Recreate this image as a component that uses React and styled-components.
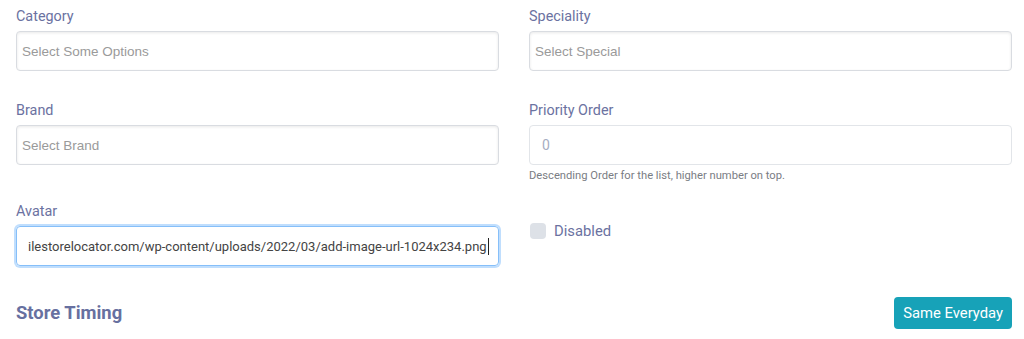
import React from "react";
import styled, { createGlobalStyle } from "styled-components";

const Global = createGlobalStyle`
  html, body { margin: 0; padding: 0; background: #fff; }
  body { font-family: Roboto, "Liberation Sans", sans-serif; }
  * { box-sizing: border-box; }
`;

const Page = styled.div`
  padding: 7px 12px 0 16px;
`;

const Row = styled.div`
  display: grid;
  grid-template-columns: minmax(0, 1fr) minmax(0, 1fr);
  column-gap: 30px;
  margin-bottom: ${(p) => p.$mb}px;
`;

const Group = styled.div`
  display: flex;
  flex-direction: column;
  min-width: 0;
  padding-top: ${(p) => p.$pt || 0}px;
`;

const Label = styled.label`
  font-size: 14.4px;
  line-height: 20px;
  color: #6b72a1;
  margin-bottom: ${(p) => p.$mb ?? 4}px;
`;

const Chosen = styled.div`
  height: 40px;
  border: 1px solid #d9dce1;
  border-radius: 4px;
  box-shadow: inset 0 1px 3px rgba(0, 0, 0, 0.09);
  display: flex;
  align-items: center;
  padding-left: 5px;
  font-family: "Liberation Sans", Arial, sans-serif;
  font-size: 13.5px;
  color: #9a9a9a;
`;

const NumberBox = styled.div`
  height: 40px;
  border: 1px solid #e2e5e9;
  border-radius: 4px;
  display: flex;
  align-items: center;
  padding-left: 12px;
  font-size: 14px;
  color: #a6adc2;
`;

const FocusBox = styled.div`
  height: 40px;
  border: 1px solid #86bff9;
  border-radius: 4px;
  box-shadow: 0 0 0 2px rgba(140, 195, 252, 0.55);
  display: flex;
  align-items: center;
  padding-left: 11px;
  font-size: 13px;
  color: #444;
  white-space: nowrap;
  overflow: hidden;
`;

const Caret = styled.span`
  display: inline-block;
  flex: none;
  width: 1px;
  height: 17px;
  background: #222;
  margin-left: 1px;
`;

const Help = styled.div`
  font-size: 11.2px;
  line-height: 16px;
  color: #7a7d84;
  margin-top: 3px;
`;

const CheckRow = styled.label`
  display: flex;
  align-items: center;
  gap: 8px;
  height: 20px;
  padding-left: 1px;
`;

const Box = styled.span`
  width: 16px;
  height: 16px;
  border-radius: 4px;
  background: #dde1e7;
`;

const CheckText = styled.span`
  font-size: 14.8px;
  color: #6b72a1;
`;

const Section = styled.div`
  display: flex;
  align-items: center;
  justify-content: space-between;
`;

const Heading = styled.h3`
  margin: 0;
  font-size: 18.4px;
  font-weight: 700;
  color: #6770a0;
  position: relative;
  top: -1px;
`;

const Button = styled.button`
  height: 32px;
  padding: 0 9px 0 9px;
  border: none;
  border-radius: 4px;
  background: #17a2b8;
  color: #fff;
  font-family: Roboto, sans-serif;
  font-size: 14.8px;
`;

export default function App() {
  return (
    <>
      <Global />
      <Page>
        <Row $mb={30}>
          <Group>
            <Label>Category</Label>
            <Chosen>Select Some Options</Chosen>
          </Group>
          <Group>
            <Label>Speciality</Label>
            <Chosen>Select Special</Chosen>
          </Group>
        </Row>
        <Row $mb={18}>
          <Group>
            <Label>Brand</Label>
            <Chosen>Select Brand</Chosen>
          </Group>
          <Group>
            <Label>Priority Order</Label>
            <NumberBox>0</NumberBox>
            <Help>Descending Order for the list, higher number on top.</Help>
          </Group>
        </Row>
        <Row $mb={31}>
          <Group>
            <Label $mb={4}>Avatar</Label>
            <FocusBox>
              ilestorelocator.com/wp-content/uploads/2022/03/add-image-url-1024x234.png
              <Caret />
            </FocusBox>
          </Group>
          <Group $pt={19}>
            <CheckRow>
              <Box />
              <CheckText>Disabled</CheckText>
            </CheckRow>
          </Group>
        </Row>
        <Section>
          <Heading>Store Timing</Heading>
          <Button>Same Everyday</Button>
        </Section>
      </Page>
    </>
  );
}
